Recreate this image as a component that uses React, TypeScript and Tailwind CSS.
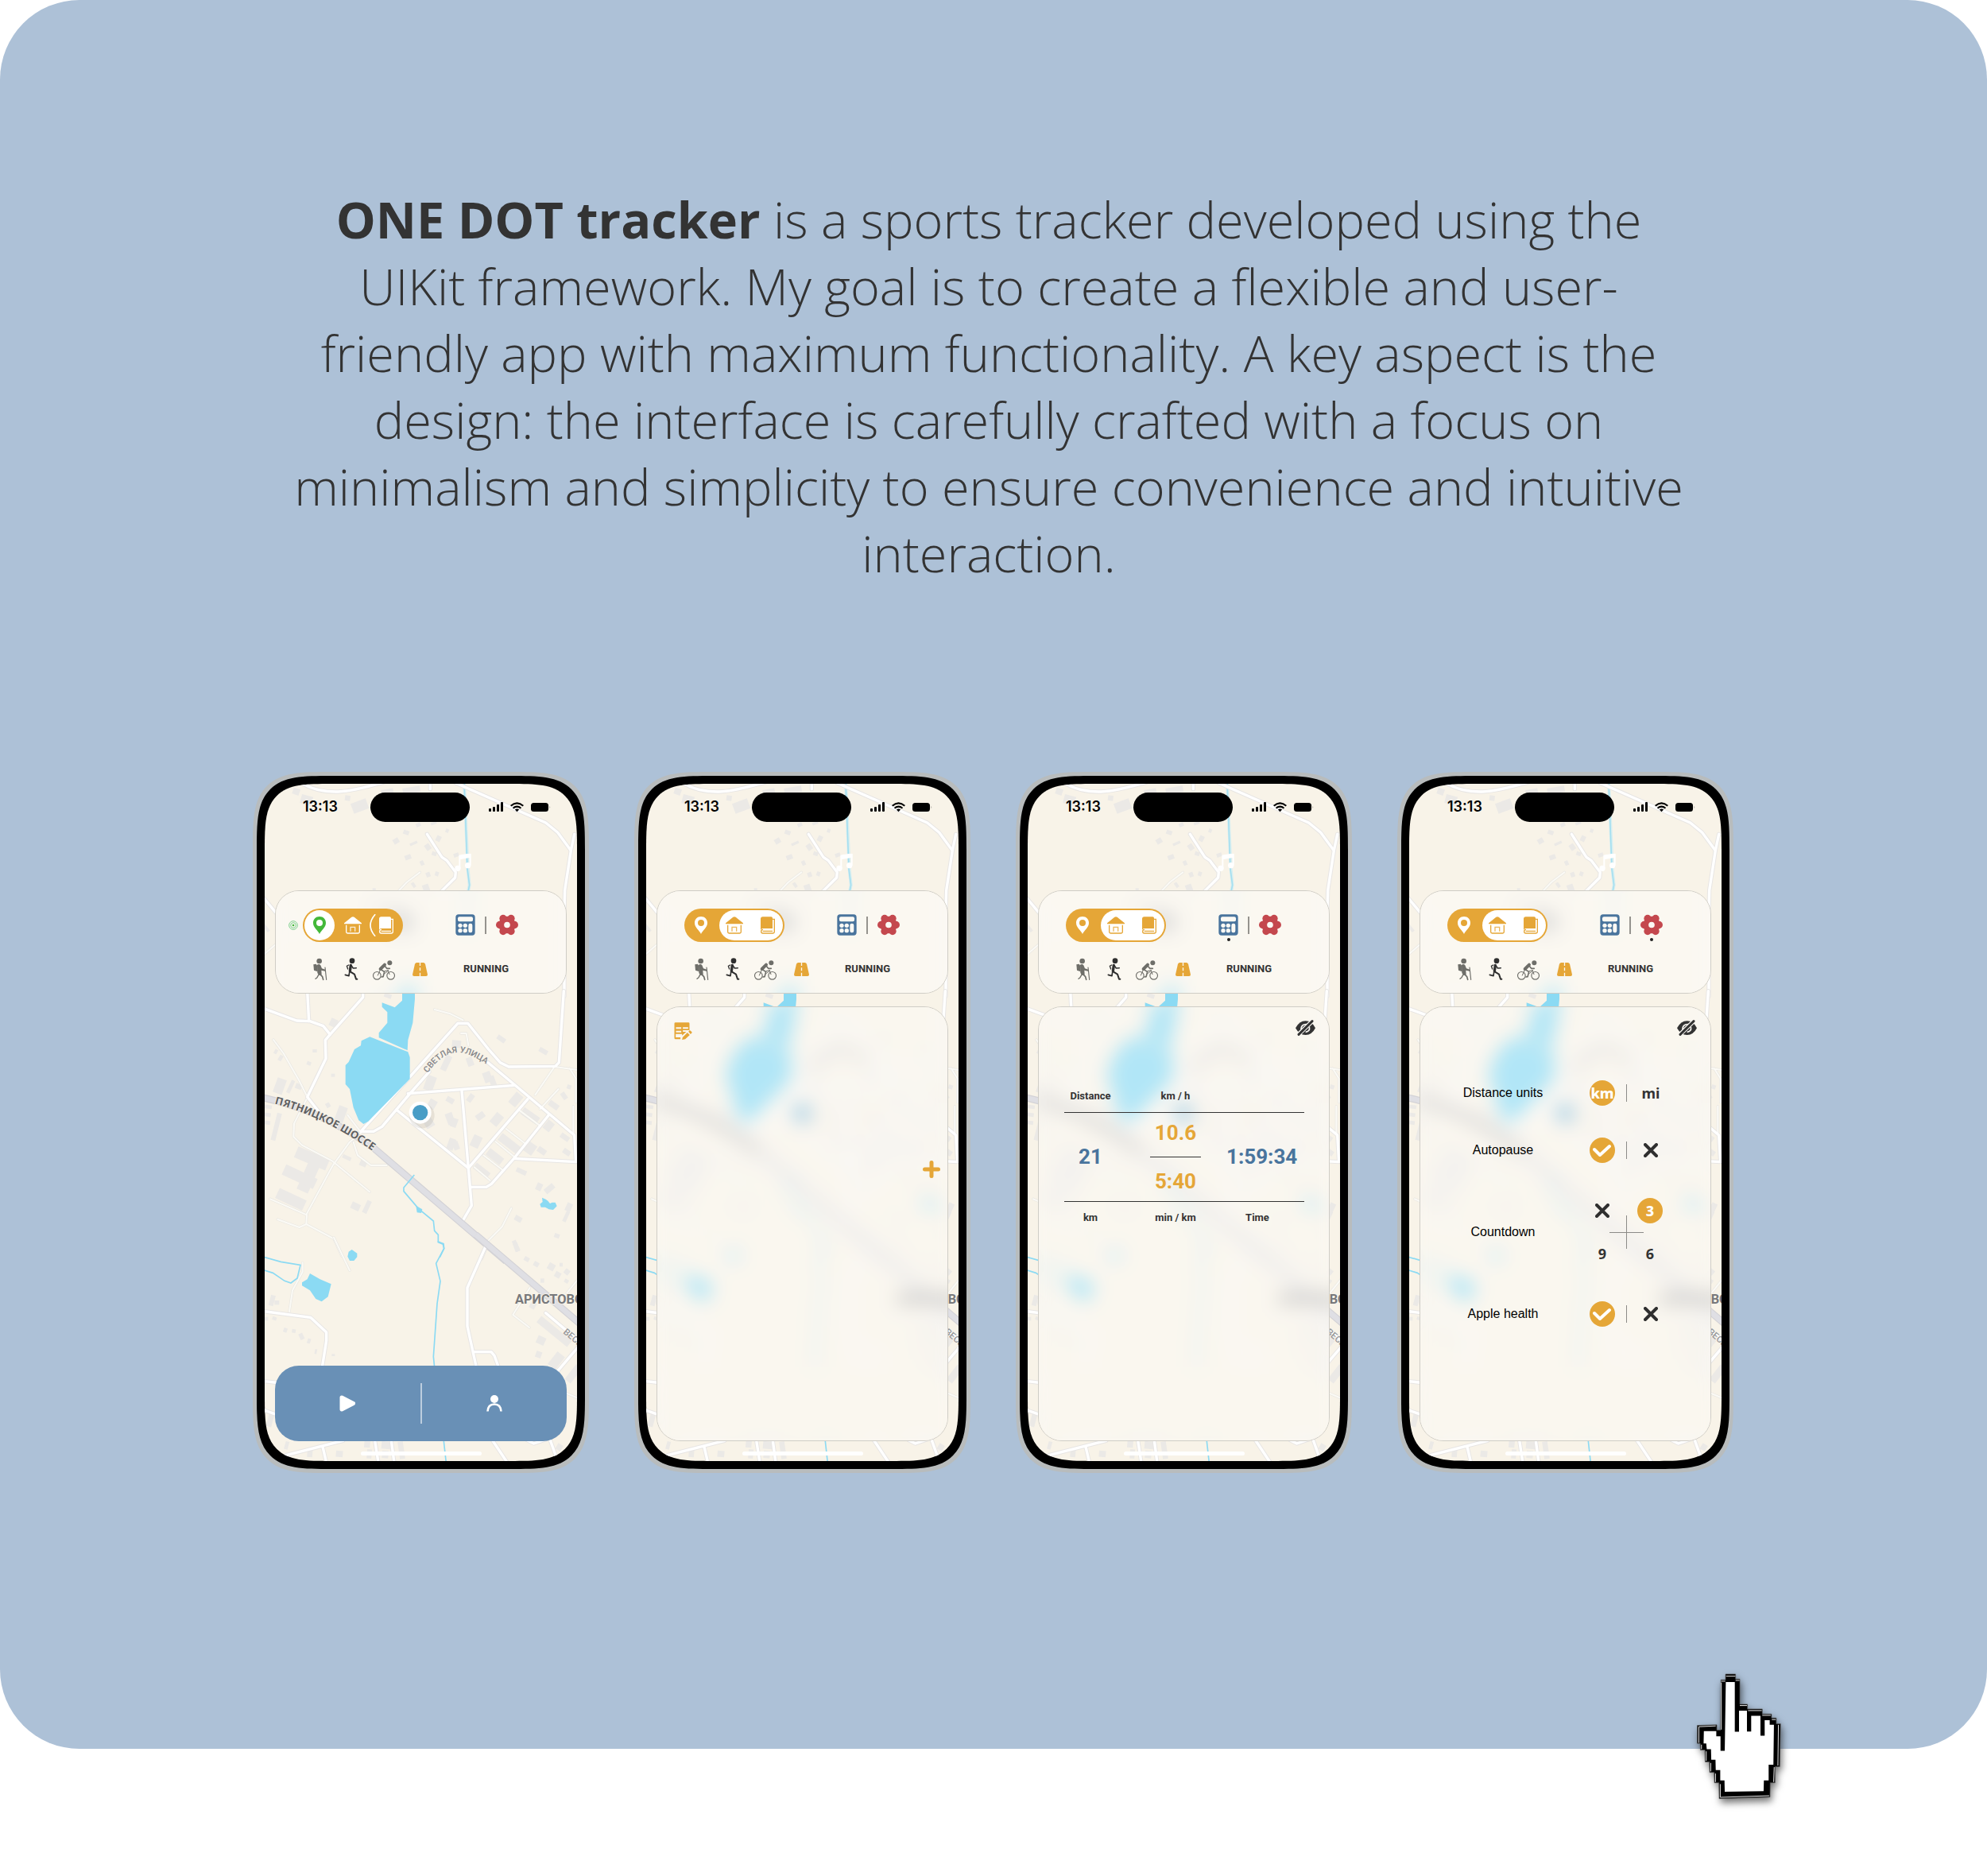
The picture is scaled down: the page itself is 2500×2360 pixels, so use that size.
import type { ReactNode } from 'react';

const MAP_ROADS_TOP = [
  'M200 70 Q260 110 345 108 Q400 106 520 72',
  'M790 75 L960 150 L1130 225 L1175 262 L1225 330 L1238 268',
  'M1225 330 L1202 480 L1200 560 L1200 880',
  'M682 268 L738 355 L756 367 L790 412 L788 432 L735 485',
  'M66 510 L112 565 L180 640',
  'M694 60 V98',
];
const MAP_LANES_TOP = ['M655 412 L605 450 L575 482', 'M66 722 L110 685'];

const MAP_ROADS_MID = [
  'M60 84 L190 132 L240 134 L290 152 L316 184 L440 44 V20',
  'M230 20 L236 134',
  'M316 184 L298 205 L300 275 L230 420 L272 474',
  'M432 550 L798 142 L836 142 L914 240 L958 290 L990 306 L1166 304 L1180 290 L1198 20',
  'M440 550 H480 L512 532 L615 410 L690 325',
  'M610 407 L1010 376',
  'M912 290 L1010 372 L1238 564 L1244 665 L1010 652',
  'M566 468 L838 688 L1062 428',
  'M813 396 L838 688 L850 830 L816 888',
  'M850 760 H905 L925 748 L1010 652 L1140 490',
  'M905 985 L886 1030',
];
const MAP_LANES_MID = [
  'M102 204 L140 255 L200 360 L226 412',
  'M226 430 L180 520 L178 570 L210 602 L325 662 L465 778',
  'M440 550 L390 590 L325 680 L228 860 L226 900 L200 912 L118 882',
  'M90 805 L228 865',
  'M226 900 L330 955 L360 1020',
  'M382 488 L430 550',
  'M404 590 L420 640 L470 678 H530',
  'M710 90 L770 106 L818 130',
  'M810 180 H830 L838 225',
  'M1160 310 L1090 412',
  'M1178 390 L1108 466',
  'M1166 306 L1250 318 M1220 312 L1244 350 V440',
  'M980 540 L1050 594 M940 588 L1010 645 M895 640 L965 694 M860 685 L920 735',
  'M1030 470 L1110 530',
  'M1234 455 V560',
  'M910 965 L965 910 L1000 840',
];
const MAP_ROADS_BOTTOM = [
  'M60 268 L242 292 L302 348 L302 380 L286 480',
  'M905 20 L834 180 V325 L868 480',
  'M860 422 H924 L936 436 L952 480',
  'M1130 275 L1260 385',
  'M1255 400 L1170 500',
  'M60 532 L130 540',
  'M60 640 L130 664',
  'M150 812 L365 757 M288 780 L302 840',
  'M484 750 L498 840 M546 750 L558 840',
  'M925 750 L985 840 M1060 755 L1085 768 L1130 752 M1145 750 L1170 820',
];
const MAP_LANES_BOTTOM = [
  'M330 -10 L390 115',
  'M212 85 V120 L174 190 L162 270',
  'M1070 180 L1006 282 L1068 330',
  'M1250 150 L1210 200',
  'M1200 575 L1260 600',
];

type Block = [number, number, number, number, number];
const BLOCKS_TOP: Block[] = [
  [175, 95, 26, 24, 20], [205, 122, 44, 34, 15], [372, 122, 20, 20, 8], [398, 142, 60, 40, -20],
  [510, 98, 46, 34, -10], [590, 90, 66, 24, -10], [554, 284, 22, 20, -30], [592, 254, 22, 16, 20],
  [616, 298, 30, 10, -25], [598, 346, 24, 18, -20], [640, 226, 18, 14, -25], [675, 305, 20, 24, -35],
  [716, 274, 18, 22, 25], [700, 335, 18, 14, 20], [782, 340, 20, 14, -20], [656, 368, 14, 18, -25],
  [678, 412, 16, 18, -20], [712, 410, 14, 16, 20], [625, 450, 12, 20, -35], [666, 458, 24, 26, -20],
  [752, 248, 12, 14, 20], [696, 222, 22, 10, -20], [66, 600, 12, 40, -40], [476, 472, 12, 10, 0],
];
const BLOCKS_MID: Block[] = [
  [315, 125, 28, 30, 25], [520, 30, 28, 16, 20], [108, 350, 36, 58, 20], [160, 355, 14, 52, 25],
  [185, 370, 24, 20, 20], [104, 480, 18, 105, 14], [66, 450, 30, 14, 8], [66, 480, 26, 14, 8],
  [66, 510, 24, 14, 8], [250, 240, 16, 12, 0], [228, 286, 16, 14, 20], [300, 442, 16, 18, -30],
  [320, 332, 14, 12, 0], [340, 455, 34, 60, 20], [105, 240, 12, 18, 30], [122, 262, 14, 22, 30],
  [183, 630, 128, 44, 23], [210, 670, 46, 110, 24], [136, 700, 130, 42, 25], [112, 785, 112, 42, 25],
  [395, 820, 34, 26, 25], [446, 810, 18, 50, 25], [362, 642, 34, 14, 25], [428, 660, 26, 22, 25],
  [776, 206, 34, 28, 5], [742, 262, 24, 60, 25], [832, 270, 24, 34, -20], [675, 340, 36, 56, 20],
  [895, 325, 30, 40, -20], [918, 340, 22, 40, -20], [945, 192, 34, 18, 35], [1104, 238, 34, 18, 30],
  [686, 430, 30, 34, 30], [754, 422, 30, 20, 30], [836, 408, 20, 32, 35], [755, 480, 28, 44, -20],
  [772, 500, 24, 34, 20], [866, 480, 34, 24, -35], [672, 500, 34, 36, -30], [760, 576, 26, 44, 20],
  [780, 588, 22, 32, -20], [850, 565, 34, 46, 25], [1000, 405, 34, 50, 40], [1140, 440, 40, 22, 35],
  [928, 482, 34, 46, 40], [1035, 476, 72, 30, 35], [948, 580, 90, 32, 38], [1050, 592, 40, 42, 35],
  [905, 630, 66, 30, 38], [855, 685, 66, 26, 38], [1126, 510, 30, 38, 38], [1184, 562, 36, 20, 35],
  [1098, 612, 34, 22, 35], [1194, 618, 30, 20, 35], [1018, 692, 40, 18, 25], [1094, 745, 22, 28, 25],
  [1124, 755, 40, 22, -40], [1206, 820, 22, 32, 25], [1200, 850, 14, 42, 25], [1012, 870, 28, 20, 30],
  [1162, 936, 20, 16, 20], [1010, 960, 16, 44, -25], [1210, 374, 16, 16, 20], [1190, 402, 18, 28, -35],
];
const BLOCKS_BOTTOM: Block[] = [
  [88, 208, 18, 40, 15], [106, 228, 18, 16, 0], [68, 290, 14, 14, 0], [98, 290, 16, 12, 20],
  [140, 332, 14, 16, 20], [172, 336, 14, 14, 10], [200, 352, 16, 24, -25], [230, 372, 12, 18, 20],
  [258, 412, 8, 18, 10], [322, 430, 12, 8, 0], [1048, 64, 20, 16, 30], [1084, 82, 20, 18, 30],
  [1138, 88, 26, 26, 30], [1164, 120, 22, 22, 30], [1200, 110, 20, 20, 40], [1182, 86, 12, 14, 0],
  [1110, 145, 14, 16, 0], [1200, 148, 16, 14, 30], [1088, 330, 148, 30, 39], [1096, 364, 32, 30, 25],
  [1092, 420, 22, 24, 20], [1152, 425, 36, 60, 38], [1220, 470, 28, 70, 38], [1010, 10, 18, 34, -20],
  [80, 655, 20, 50, 15], [145, 760, 14, 30, 15], [230, 785, 20, 34, 5], [338, 795, 26, 24, 5],
  [445, 755, 22, 28, 5], [455, 790, 18, 34, 5], [510, 760, 34, 28, 5], [512, 795, 24, 28, 5],
  [575, 760, 20, 66, -8], [1170, 770, 22, 24, 30], [1070, 235, 22, 24, 30],
];

function Blocks({ items }: { items: Block[] }) {
  return (
    <g fill="#ebe9e6">
      {items.map(([x, y, w, h, a], i) => (
        <rect key={i} x={x} y={y} width={w} height={h} transform={`rotate(${a} ${x + w / 2} ${y + h / 2})`} />
      ))}
    </g>
  );
}

function Roads({ wide, thin }: { wide: string[]; thin: string[] }) {
  return (
    <g fill="none" strokeLinejoin="round" strokeLinecap="round">
      {thin.map((d) => <path key={d} d={d} stroke="#e9e7e2" strokeWidth="10" />)}
      {wide.map((d) => <path key={d} d={d} stroke="#e8e6e4" strokeWidth="16" />)}
      {thin.map((d) => <path key={d} d={d} stroke="#fbfaf5" strokeWidth="6" />)}
      {wide.map((d) => <path key={d} d={d} stroke="#ffffff" strokeWidth="10" />)}
    </g>
  );
}

const CYR = { fontFamily: 'Roboto, "Noto Sans", sans-serif' };

type Labels = 'full' | 'edge' | 'shade';

function CityMap({ labels }: { labels: Labels }) {
  return (
    <svg className="h-[852px] w-[393px] overflow-visible" viewBox="0 0 393 852" aria-hidden="true">
      <rect width="393" height="852" fill="#f8f3e8" />
      <g transform="translate(-23 -26) scale(.33333)">
        <Blocks items={BLOCKS_TOP} />
        <path d="M822 70 L836 400 L842 460 L836 490 L838 640" fill="none" stroke="#d8eef0" strokeWidth="12" />
        <path d="M822 70 L834 400 L842 460 L836 490" fill="none" stroke="#a5dff0" strokeWidth="5" />
        <Roads wide={MAP_ROADS_TOP} thin={MAP_LANES_TOP} />
        {labels === 'shade' && (
          <g>
            <rect x="540" y="570" width="90" height="60" rx="30" fill="#b9b9b9" />
            <rect x="470" y="540" width="110" height="16" fill="#cfcfcf" />
          </g>
        )}
      </g>
      <g transform="translate(-23 254) scale(.33333)">
        <Blocks items={BLOCKS_MID} />
        <Roads wide={MAP_ROADS_MID} thin={MAP_LANES_MID} />
        <path d="M588 0 L636 0 V50 L628 140 L610 205 L608 244 L500 196 V178 L532 140 V100 L512 80 V64 L560 82 L588 56 Z" fill="#8bdaf3" />
        <path d="M466 193 L610 250 L617 270 V352 L460 512 L442 522 L424 508 L404 460 L390 390 L374 372 V300 L386 288 L408 240 L432 226 L434 208 Z" fill="#8bdaf3" />
        <path d="M60 422 Q280 468 480 612 L980 1040" fill="none" stroke="#d3d2d6" strokeWidth="27" />
        <path d="M60 422 Q280 468 480 612 L980 1040" fill="none" stroke="#dfdfe4" strokeWidth="20" />
        <path d="M634 714 L594 762 V776 L650 842 L706 888 L710 925 L724 940 V968 L742 976 L746 992 L730 1025" fill="none" stroke="#8bdaf3" strokeWidth="5" />
        <path d="M640 830 L664 844 L660 858 L644 856 Z" fill="#8bdaf3" />
        <path d="M1116 800 L1130 806 L1138 812 L1146 822 L1154 818 L1166 818 L1172 832 L1158 846 L1142 844 L1128 836 L1112 836 L1108 824 L1118 816 Z" fill="#8bdaf3" />
        {labels === 'full' && (
          <g>
            <path id="highway-label" d="M106 446 Q300 494 510 648" fill="none" />
            <path id="street-label" d="M684 330 Q738 252 800 252 Q850 252 940 322" fill="none" />
            <text fontSize="40" fontWeight="700" fill="#5f6063" stroke="#f8f3e8" strokeWidth="5" paintOrder="stroke" style={{ fontFamily: '"Noto Sans", sans-serif' }}>
              <textPath href="#highway-label">ПЯТНИЦКОЕ ШОССЕ</textPath>
            </text>
            <text fontSize="32" fontWeight="500" fill="#85868a" style={CYR}>
              <textPath href="#street-label">СВЕТЛАЯ УЛИЦА</textPath>
            </text>
          </g>
        )}
        {labels === 'shade' && (
          <g fill="none">
            <path d="M110 432 Q300 478 490 622" stroke="#b4b3b2" strokeWidth="22" />
            <path d="M684 315 Q738 244 800 240 Q850 240 910 286" stroke="#d2d0cd" strokeWidth="18" />
          </g>
        )}
        <circle cx="662" cy="490" r="48" fill="#7d7868" opacity=".14" />
        <circle cx="656" cy="479" r="42" fill="#fff" />
        <circle cx="656" cy="479" r="29" fill="#489dc6" />
      </g>
      <g transform="translate(-23 574) scale(.33333)">
        <Blocks items={BLOCKS_BOTTOM} />
        <Roads wide={MAP_ROADS_BOTTOM} thin={MAP_LANES_BOTTOM} />
        <path d="M866 -20 L1270 325" fill="none" stroke="#d3d2d6" strokeWidth="27" />
        <path d="M866 -20 L1270 325" fill="none" stroke="#dfdfe4" strokeWidth="20" />
        <path d="M722 5 L744 14 L746 32 L716 88 L732 155 L720 240 L706 440 L710 480 M744 750 L754 840" fill="none" stroke="#8bdaf3" strokeWidth="5" />
        <path d="M60 62 L130 82 L204 94 L192 144 L168 162 L144 154 L100 124 L60 112" fill="none" stroke="#8bdaf3" strokeWidth="5" />
        <path d="M398 36 L418 50 V64 L406 78 H390 L382 62 L386 44 Z M240 126 L278 148 L320 166 L308 214 L284 232 L262 222 L240 190 L210 172 V160 L230 148 Z" fill="#8bdaf3" />
        {labels === 'shade' ? (
          <rect x="1016" y="204" width="250" height="34" fill="#aeadab" />
        ) : (
          <g>
            <text x={labels === 'full' ? 1014 : 1208} y="239" fontSize="49" fontWeight="700" fill="#77787b" stroke="#f8f3e8" strokeWidth="5" paintOrder="stroke" style={CYR}>
              {labels === 'full' ? 'АРИСТОВО' : 'ВО'}
            </text>
            <text x="0" y="0" transform="translate(1194 350) rotate(40)" fontSize="34" fontWeight="500" fill="#97989a" style={CYR}>ВЕСЕ</text>
          </g>
        )}
      </g>
    </svg>
  );
}

function StatusIcons() {
  return (
    <svg className="h-[13px] w-[80px]" viewBox="0 0 80 13" aria-hidden="true">
      <g fill="#000">
        <rect x="1" y="8" width="3" height="4" rx="1" />
        <rect x="6" y="6" width="3" height="6" rx="1" />
        <rect x="11" y="3" width="3" height="9" rx="1" />
        <rect x="16" y="0" width="3" height="12" rx="1" />
        <path d="M36.500 12.300 L33.900 9.500 Q36.500 7.400 39.100 9.500 Z" />
        <rect x="54" y="1" width="22" height="11" rx="3.500" />
        <path d="M77.500 4.800 Q79 6.500 77.500 8.200 Z" opacity=".4" />
      </g>
      <g fill="none" stroke="#000" strokeWidth="2.100">
        <path d="M31.500 7.700 Q36.500 3.500 41.500 7.700" />
        <path d="M28.700 4.700 Q36.500 -2 44.300 4.700" />
      </g>
    </svg>
  );
}

function PinIcon({ dot, fill }: { dot: string; fill: string }) {
  return (
    <svg className="h-[22px] w-4" viewBox="0 0 48 66" aria-hidden="true">
      <path d="M24 0 C10 0 0 10 0 24 C0 42 18 52 24 66 C30 52 48 42 48 24 C48 10 38 0 24 0 Z" fill={fill} />
      <circle cx="24" cy="24" r="12" fill={dot} />
    </svg>
  );
}

function HouseIcon() {
  return (
    <svg className="h-[22px] w-[22px]" viewBox="0 0 66 66" aria-hidden="true">
      <path d="M0 25 L28 2 Q33 -1 38 2 L66 25 V28 H0 Z" fill="currentColor" />
      <path d="M8 32 V58 Q8 63 13 63 H53 Q58 63 58 58 V32" fill="none" stroke="currentColor" strokeWidth="4" />
      <path d="M24 56 V40 H41 V56" fill="none" stroke="currentColor" strokeWidth="4" opacity=".8" />
    </svg>
  );
}

function BookIcon() {
  return (
    <svg className="h-[22px] w-[18px]" viewBox="0 0 54 66" aria-hidden="true">
      <path d="M0 9 Q0 1 8 1 H40 Q45 1 45 6 V45 H8 Q3 45 0 50 Z" fill="currentColor" />
      <path d="M45 10 H52 V58 Q52 63 47 63 H8 Q2 63 2 56 Q2 49 9 49 M8 55 H45" fill="none" stroke="currentColor" strokeWidth="4" />
    </svg>
  );
}

function CalculatorIcon() {
  return (
    <svg className="h-[27px] w-[25px]" viewBox="0 0 75 81" aria-hidden="true">
      <rect x="1" y="1" width="73" height="79" rx="11" fill="#49749d" />
      <rect x="9" y="10" width="57" height="18" rx="6" fill="#fbf9f4" />
      <g fill="#fbf9f4">
        <circle cx="18" cy="43" r="8" /><circle cx="37" cy="43" r="8" />
        <circle cx="18" cy="62" r="8" /><circle cx="37" cy="62" r="8" />
        <rect x="49" y="35" width="15" height="35" rx="7" />
      </g>
    </svg>
  );
}

function FlowerIcon() {
  return (
    <svg className="h-[27px] w-7" viewBox="-42 -40 84 80" aria-hidden="true">
      <g fill="#c4484e">
        <circle r="32" />
        <circle cx="-28" cy="0" r="14" /><circle cx="28" cy="0" r="14" />
        <circle cx="-15" cy="-24" r="14" /><circle cx="15" cy="-24" r="14" />
        <circle cx="-15" cy="24" r="14" /><circle cx="15" cy="24" r="14" />
      </g>
      <circle r="11.500" fill="#fbf9f4" />
    </svg>
  );
}

function HikerIcon() {
  return (
    <svg className="h-[29px] w-5" viewBox="248 732 60 87" aria-hidden="true">
      <g fill="#6e6e69" stroke="none">
        <circle cx="274" cy="744" r="10" />
        <path d="M252 757 L262 755 L267 762 L268 784 L254 779 Z" />
        <path d="M266 758 Q274 753 279 760 L284 772 L297 776 L296 782 L282 779 L283 796 L272 798 L267 788 Z" />
      </g>
      <g fill="none" stroke="#6e6e69" strokeLinecap="round" strokeLinejoin="round">
        <path d="M277 794 L286 803 L289 814" strokeWidth="5" />
        <path d="M271 797 L266 806 L260 811" strokeWidth="4" />
        <path d="M296 768 L301 814" strokeWidth="3.500" />
      </g>
    </svg>
  );
}

function RunnerIcon() {
  return (
    <svg className="h-[29px] w-5" viewBox="366 732 60 87" aria-hidden="true">
      <circle cx="399" cy="743" r="10" fill="#2f2f2f" />
      <g fill="none" stroke="#2f2f2f" strokeLinecap="round" strokeLinejoin="round">
        <path d="M394 760 L391 782" strokeWidth="10" />
        <path d="M386 759 L379 763 L383 774" strokeWidth="4" />
        <path d="M397 762 L403 771 L415 770" strokeWidth="4.500" />
        <path d="M392 784 L408 794 L414 812 L418 812" strokeWidth="6" />
        <path d="M389 786 L387 800 L373 796" strokeWidth="5" />
      </g>
    </svg>
  );
}

function BikeIcon() {
  return (
    <svg className="h-[29px] w-[30px]" viewBox="474 732 90 87" aria-hidden="true">
      <g fill="none" stroke="#6e6e69" strokeLinecap="round" strokeLinejoin="round">
        <circle cx="493" cy="799" r="14.500" strokeWidth="3.500" />
        <circle cx="545" cy="799" r="14.500" strokeWidth="3.500" />
        <path d="M522 758 L506 774" strokeWidth="12" />
        <path d="M508 776 L521 785 L516 803 L510 804" strokeWidth="5" />
        <path d="M522 762 L530 772 L541 772" strokeWidth="5" />
        <path d="M504 780 L496 798 M524 790 L535 780 L540 794 M522 782 L535 779" strokeWidth="3" />
      </g>
      <circle cx="541" cy="751" r="9" fill="#6e6e69" />
    </svg>
  );
}

function RoadIcon() {
  return (
    <svg className="h-[17px] w-[19px]" viewBox="0 0 57 51" aria-hidden="true">
      <path d="M16 0 H41 Q46 0 48 5 L57 45 Q57 51 51 51 H6 Q0 51 0 45 L9 5 Q11 0 16 0 Z" fill="#e5a637" />
      <path d="M28.500 0 V12 M28.500 19 V31 M28.500 38 V51" stroke="#fbf9f4" strokeWidth="4" />
    </svg>
  );
}

function EyeOffIcon() {
  return (
    <svg className="h-5 w-[25px]" viewBox="0 0 75 60" aria-hidden="true">
      <path d="M0 31 Q14 4 38 4 Q62 4 75 31 Q62 57 38 57 Q14 57 0 31 Z" fill="#333" />
      <path d="M22 40 Q18 24 32 18 Q40 15 46 18 M52 26 Q56 44 38 46" fill="none" stroke="#faf8f3" strokeWidth="5" />
      <path d="M10 56 L64 4" stroke="#faf8f3" strokeWidth="16" />
      <path d="M12 55 L63 5" stroke="#333" strokeWidth="9" strokeLinecap="round" />
    </svg>
  );
}

function NoteEditIcon() {
  return (
    <svg className="h-[22px] w-[23px]" viewBox="0 0 68 66" aria-hidden="true">
      <path d="M5 1 H54 Q58 1 58 5 V30 H33 V36 H46 L30 50 V44 H6 V57 H24 V64 H5 Q1 64 1 59 V5 Q1 1 5 1 Z" fill="#e5a637" />
      <path d="M7 19 H27 V25 H7 Z M7 32 H27 V38 H7 Z M33 19 H53 V25 H33 Z" fill="#faf8f3" />
      <path d="M32 57 L50 39 L59 48 L42 64 L30 66 Z M54 35 L58 31 Q60 30 63 33 L67 37 Q68 39 66 41 L62 45 Z" fill="#e5a637" />
    </svg>
  );
}

function MusicIcon() {
  return (
    <svg className="h-[22px] w-[21px]" viewBox="0 0 61 66" aria-hidden="true">
      <path d="M18 54 V8 L58 1 V44" fill="none" stroke="#fff" strokeWidth="6" />
      <path d="M18 8 L60 0 V14 L18 22 Z" fill="#fff" />
      <circle cx="11" cy="55" r="11" fill="#fff" /><circle cx="49" cy="44" r="11" fill="#fff" />
    </svg>
  );
}

function CheckIcon() {
  return (
    <svg className="h-4 w-6" viewBox="0 0 24 16" aria-hidden="true">
      <path d="M2 7 L9 14 L21 3" fill="none" stroke="#fff" strokeWidth="4" strokeLinecap="round" strokeLinejoin="round" />
    </svg>
  );
}

function CrossIcon() {
  return (
    <svg className="h-[18px] w-[18px]" viewBox="0 0 18 18" aria-hidden="true">
      <path d="M2 2 L16 16 M16 2 L2 16" fill="none" stroke="#2f2f2f" strokeWidth="4" strokeLinecap="round" />
    </svg>
  );
}

type Active = 'none' | 'calculator' | 'settings';

function Toolbar({ located, active }: { located: boolean; active: Active }) {
  return (
    <section className="relative h-[130px] shrink-0 overflow-hidden rounded-[30px] border border-[#cfcdc6] bg-[#f8f3e8]">
      <div className="absolute top-[-135px] left-[-14px] blur-[12px]"><CityMap labels="shade" /></div>
      <div className="relative flex h-full flex-col bg-white/40 pt-[21px]">
        <div className="flex h-[43px] items-center">
          <div className="flex w-[34px] justify-end pr-[6px]">
            {located && (
              <svg className="h-3 w-3" viewBox="0 0 36 36" aria-hidden="true">
                <g fill="none" stroke="#7fd08e" strokeWidth="3"><circle cx="18" cy="18" r="16" /><circle cx="18" cy="18" r="10" /></g>
                <circle cx="18" cy="18" r="4" fill="#43b83a" />
              </svg>
            )}
          </div>
          <div className="relative flex h-[42px] w-[126px] items-center rounded-full bg-[#e5a637]">
            {!located && <span className="absolute top-0.5 right-0.5 h-[38px] w-20 rounded-full bg-white" />}
            <button aria-label="Location" className="relative flex w-[42px] justify-center">
              {located ? (
                <span className="flex h-[38px] w-[38px] items-center justify-center rounded-full bg-white"><PinIcon fill="#43b83a" dot="#fff" /></span>
              ) : (
                <PinIcon fill="#fff" dot="#e5a637" />
              )}
            </button>
            <button aria-label="Home" className={located ? 'relative flex w-[42px] justify-center text-white' : 'relative flex w-[42px] justify-center text-[#e5a637]'}><HouseIcon /></button>
            <button aria-label="Journal" className={located ? 'relative flex w-[42px] justify-center text-white' : 'relative flex w-[42px] justify-center text-[#e5a637]'}>
              {located && (
                <svg className="absolute top-[-3px] left-0 h-7 w-2" viewBox="0 0 24 84" aria-hidden="true">
                  <path d="M20 2 Q-14 42 20 82" fill="none" stroke="#fff" strokeWidth="5" strokeLinecap="round" />
                </svg>
              )}
              <BookIcon />
            </button>
          </div>
          <div className="ml-[66px] flex items-center">
            <button aria-label="Calculator" className="relative">
              <CalculatorIcon />
              {active === 'calculator' && <span className="absolute top-[30px] left-[11px] h-1 w-1 rounded-full bg-[#222]" />}
            </button>
            <span className="mx-3 h-[22px] w-0.5 bg-[#95938e]" />
            <button aria-label="Settings" className="relative">
              <FlowerIcon />
              {active === 'settings' && <span className="absolute top-[30px] left-3 h-1 w-1 rounded-full bg-[#222]" />}
            </button>
          </div>
        </div>
        <div className="mt-[19px] flex h-[30px] items-center pl-[46px]">
          <button aria-label="Hiking"><HikerIcon /></button>
          <button aria-label="Running" className="ml-[19px]"><RunnerIcon /></button>
          <button aria-label="Cycling" className="ml-4"><BikeIcon /></button>
          <button aria-label="Road" className="ml-[21px]"><RoadIcon /></button>
          <span className="ml-[45px] w-[56px] text-center font-['Roboto',sans-serif] text-[13px] font-bold text-[#333]">RUNNING</span>
        </div>
      </div>
    </section>
  );
}

function Phone({ located = false, active = 'none', children }: { located?: boolean; active?: Active; children: ReactNode }) {
  return (
    <article className="rounded-[71px] bg-[#b8bcbd] p-[5px] supports-[corner-shape:squircle]:rounded-[99px] supports-[corner-shape:squircle]:[corner-shape:superellipse(1.8)]">
      <div className="rounded-[66px] bg-black p-[10px] supports-[corner-shape:squircle]:rounded-[94px] supports-[corner-shape:squircle]:[corner-shape:superellipse(1.8)]">
        <div className="relative h-[852px] w-[393px] overflow-hidden rounded-[56px] supports-[corner-shape:squircle]:rounded-[84px] supports-[corner-shape:squircle]:[corner-shape:superellipse(1.8)]">
          <div className="absolute inset-0"><CityMap labels={located ? 'full' : 'edge'} /></div>
          <div className="relative flex h-full flex-col px-[13px]">
            <header className="relative flex h-[54px] shrink-0 items-start justify-between pt-[11px] pr-[19px] pl-[35px]">
              <time className="mt-[8px] font-['Inter',sans-serif] text-[18px] leading-5 font-semibold text-black">13:13</time>
              <span className="absolute top-[11px] left-[120px] h-[37px] w-[125px] rounded-full bg-black" />
              <span className="mt-[12px]"><StatusIcons /></span>
            </header>
            <div className="flex h-20 shrink-0 pt-[34px] pl-[226px]"><MusicIcon /></div>
            <Toolbar located={located} active={active} />
            {children}
            <div className="flex h-[25px] shrink-0 items-center justify-center pb-px">
              <span className="mt-1.5 h-[5px] w-[152px] rounded-full bg-white" />
            </div>
          </div>
        </div>
      </div>
    </article>
  );
}

function Sheet({ children }: { children: ReactNode }) {
  return (
    <section className="relative mt-4 min-h-0 flex-1 overflow-hidden rounded-[30px] border border-[#cfcdc6] bg-[#f8f3e8]">
      <div className="absolute top-[-281px] left-[-14px] blur-[12px]"><CityMap labels="shade" /></div>
      <div className="relative flex h-full flex-col bg-white/33">{children}</div>
    </section>
  );
}

function Choice({ on, label, children }: { on?: boolean; label: string; children: ReactNode }) {
  return (
    <button
      aria-label={label}
      className={
        on
          ? "flex h-8 w-8 items-center justify-center rounded-full bg-[#e5a637] font-['Noto_Sans',sans-serif] text-[18px] leading-none font-extrabold text-white"
          : "flex h-8 w-8 items-center justify-center font-['Noto_Sans',sans-serif] text-[18px] leading-none font-bold text-[#333]"
      }
    >
      {children}
    </button>
  );
}

function SettingRow({ name, left, right }: { name: string; left: ReactNode; right: ReactNode }) {
  return (
    <div className="flex h-8 items-center">
      <span className="ml-[34px] w-[140px] text-center font-['Liberation_Sans',sans-serif] text-[16px] text-black">{name}</span>
      <span className="ml-[39px] flex items-center">
        {left}
        <span className="mx-[14px] h-[22px] w-px bg-[#8c8b88]" />
        {right}
      </span>
    </div>
  );
}

const HEAD = "font-['Roboto',sans-serif] text-[13px] font-bold text-[#333]";
const VALUE = "font-['Roboto',sans-serif] text-[26px] leading-7 font-bold";

function PaceTable() {
  return (
    <table className="mt-[92px] ml-8 w-[302px] table-fixed border-collapse text-center">
      <thead className={HEAD}>
        <tr className="h-10 border-b border-[#333]">
          <th className="w-[76px] pr-2.5">Distance</th>
          <th>km / h</th>
          <th className="w-[98px]"></th>
        </tr>
      </thead>
      <tbody className={VALUE}>
        <tr className="h-28 border-b border-[#333]">
          <td className="pr-2.5 text-[#49749d]">21</td>
          <td className="text-[#e5a637]">
            <div>10.6</div>
            <div className="mx-auto my-4 h-px w-16 bg-[#333]" />
            <div>5:40</div>
          </td>
          <td className="pr-3 whitespace-nowrap text-[#49749d]">1:59:34</td>
        </tr>
      </tbody>
      <tfoot className={HEAD}>
        <tr className="h-10">
          <td className="pr-2.5">km</td>
          <td>min / km</td>
          <td className="pr-5">Time</td>
        </tr>
      </tfoot>
    </table>
  );
}

function HandCursor() {
  return (
    <svg className="absolute right-[250px] bottom-[87px] h-[173px] w-[120px] drop-shadow-[2px_5px_5px_rgba(0,0,0,0.55)]" viewBox="90 60 360 520" aria-hidden="true">
      <path d="M213 78 H251 V97 H267 V192 H296 V210 H352 V229 H387 V244 H405 V266 H421 L418 428 H401 L400 489 H382 L381 543 L189 549 L188 489 H171 L170 450 H153 L152 410 H136 L135 365 H118 L117 340 H106 V272 L180 270 V290 H194 L195 100 H213 Z" fill="#000" stroke="#555" strokeWidth="2" />
      <path d="M214 108 H248 V296 H264 V216 H294 V295 H310 V236 H345 V311 H361 V252 H380 V270 H396 L394 421 H376 V480 H358 L357 521 L210 523 L209 480 H193 V441 H176 L175 402 H159 L158 362 H142 L140 340 H130 L131 294 H178 V313 H194 V368 H210 Z" fill="#fff" />
      <g fill="none" stroke="#e8e8e8" strokeWidth="3">
        <path d="M215 86 H250 M196 105 H212 M251 102 H266 M197 110 V288 M267 197 H294 M298 216 H350 M352 234 H384 M388 250 H403 M413 270 L411 424 M397 430 L395 486 M112 338 V277 L176 274 M122 345 V362 M140 370 V406 M157 414 V446 M175 454 V486 M193 494 V544 L378 538" />
      </g>
    </svg>
  );
}

export default function App() {
  return (
    <div className="min-h-screen bg-white">
      <div className="relative pb-40">
        <main className="rounded-[100px] bg-[#adc1d7] pt-[234px] pb-[347px]">
          <p className="mx-auto max-w-[1840px] pr-3 text-center font-['Open_Sans',sans-serif] text-[63px] leading-[84px] font-light text-[#333]">
            <strong className="font-bold">ONE DOT tracker</strong> is a sports tracker developed using the<br />
            UIKit framework. My goal is to create a flexible and user-<br />
            friendly app with maximum functionality. A key aspect is the<br />
            design: the interface is carefully crafted with a focus on<br />
            minimalism and simplicity to ensure convenience and intuitive<br />
            interaction.
          </p>
          <div className="mt-[233px] flex justify-center gap-[57px] pr-px">
            <Phone located>
              <div className="flex-1" />
              <nav className="flex h-[95px] shrink-0 items-center rounded-[30px] bg-[#6990b6]">
                <button aria-label="Start" className="flex flex-1 justify-center">
                  <svg className="h-[21px] w-5" viewBox="0 0 20 21" aria-hidden="true">
                    <path d="M3 3 L17.500 10.500 L3 18 Z" fill="#fff" stroke="#fff" strokeWidth="5" strokeLinejoin="round" />
                  </svg>
                </button>
                <span className="h-[51px] w-0.5 bg-white/55" />
                <button aria-label="Profile" className="flex flex-1 justify-center">
                  <svg className="h-[21px] w-5" viewBox="0 0 20 21" aria-hidden="true">
                    <circle cx="10" cy="5" r="5" fill="#fff" />
                    <path d="M1.500 20.500 Q2 11.500 10 11.500 Q18 11.500 18.500 20.500" fill="none" stroke="#fff" strokeWidth="2.600" />
                  </svg>
                </button>
              </nav>
            </Phone>
            <Phone>
              <Sheet>
                <button aria-label="Edit notes" className="mt-[19px] ml-[21px] w-6"><NoteEditIcon /></button>
                <button aria-label="Add" className="mt-[152px] mr-[9px] self-end">
                  <svg className="h-[22px] w-[22px]" viewBox="0 0 22 22" aria-hidden="true">
                    <path d="M11 2.500 V19.500 M2.500 11 H19.500" stroke="#e5a637" strokeWidth="5" strokeLinecap="round" />
                  </svg>
                </button>
              </Sheet>
            </Phone>
            <Phone active="calculator">
              <Sheet>
                <button aria-label="Hide" className="absolute top-4 right-[17px]"><EyeOffIcon /></button>
                <PaceTable />
              </Sheet>
            </Phone>
            <Phone active="settings">
              <Sheet>
                <button aria-label="Hide" className="absolute top-4 right-[17px]"><EyeOffIcon /></button>
                <div className="mt-[92px] flex flex-col">
                  <SettingRow name="Distance units" left={<Choice on label="Kilometres">km</Choice>} right={<Choice label="Miles">mi</Choice>} />
                  <div className="mt-10">
                    <SettingRow name="Autopause" left={<Choice on label="Autopause on"><CheckIcon /></Choice>} right={<Choice label="Autopause off"><CrossIcon /></Choice>} />
                  </div>
                  <div className="mt-[43px] flex h-[88px] items-center">
                    <span className="ml-[34px] w-[140px] text-center font-['Liberation_Sans',sans-serif] text-[16px] text-black">Countdown</span>
                    <div className="relative ml-[39px] grid grid-cols-2 gap-x-7 gap-y-[22px]">
                      <Choice label="No countdown"><CrossIcon /></Choice>
                      <Choice on label="3 seconds">3</Choice>
                      <Choice label="9 seconds">9</Choice>
                      <Choice label="6 seconds">6</Choice>
                      <span className="absolute top-[22px] left-[46px] h-[42px] w-px bg-[#8c8b88]" />
                      <span className="absolute top-[43px] left-[25px] h-px w-[43px] bg-[#8c8b88]" />
                    </div>
                  </div>
                  <div className="mt-[43px]">
                    <SettingRow name="Apple health" left={<Choice on label="Apple health on"><CheckIcon /></Choice>} right={<Choice label="Apple health off"><CrossIcon /></Choice>} />
                  </div>
                </div>
              </Sheet>
            </Phone>
          </div>
        </main>
        <HandCursor />
      </div>
    </div>
  );
}
